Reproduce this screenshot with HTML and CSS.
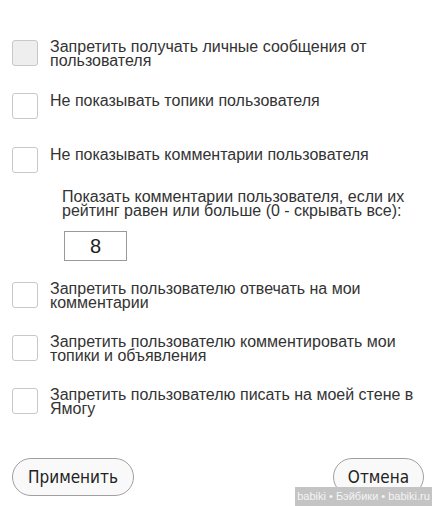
FILE: index.html
```html
<!DOCTYPE html>
<html lang="ru">
<head>
<meta charset="utf-8">
<link rel="stylesheet" href="styles.css">
</head>
<body>
<div class="page">
  <div class="row r1">
    <span class="cb cb-filled"></span>
    <span class="label">Запретить получать личные сообщения от пользователя</span>
  </div>
  <div class="row r2">
    <span class="cb"></span>
    <span class="label">Не показывать топики пользователя</span>
  </div>
  <div class="row r3">
    <span class="cb"></span>
    <span class="label">Не показывать комментарии пользователя</span>
  </div>
  <div class="sub">
    <div class="sub-text">Показать комментарии пользователя, если их рейтинг равен или больше (0 - скрывать все):</div>
    <div class="num">8</div>
  </div>
  <div class="row r4">
    <span class="cb"></span>
    <span class="label">Запретить пользователю отвечать на мои комментарии</span>
  </div>
  <div class="row r5">
    <span class="cb"></span>
    <span class="label">Запретить пользователю комментировать мои топики и объявления</span>
  </div>
  <div class="row r6">
    <span class="cb"></span>
    <span class="label">Запретить пользователю писать на моей стене в Ямогу</span>
  </div>
  <div class="buttons">
    <span class="btn btn-apply">Применить</span>
    <span class="btn btn-cancel">Отмена</span>
  </div>
</div>
<div class="watermark">babiki • Бэйбики • babiki.ru</div>
</body>
</html>
```
FILE: styles.css
```css
html, body {
  margin: 0;
  padding: 0;
  background: #fff;
}
body {
  width: 439px;
  height: 506px;
  position: relative;
  overflow: hidden;
  font-family: "Liberation Sans", Arial, sans-serif;
  color: #333;
}
.page {
  padding: 40px 0 0 12px;
}
.row {
  display: flex;
  align-items: flex-start;
  gap: 12px;
}
.cb {
  flex: none;
  width: 24px;
  height: 24px;
  border: 1px solid #c8c8c8;
  border-radius: 3px;
  background: #fff;
}
.cb-filled {
  background: #eeeeee;
}
.label {
  font-size: 16px;
  line-height: 14px;
  width: 372px;
}
.r2 .label, .r3 .label { padding-top: 1px; }
.r2 { margin-top: 25px; }
.r3 { margin-top: 28px; }
.sub {
  margin: 17px 0 0 50px;
}
.sub-text {
  font-size: 16px;
  line-height: 14px;
  width: 360px;
}
.num {
  margin: 13px 0 0 2px;
  width: 61px;
  height: 28px;
  border: 1px solid #999;
  display: flex;
  align-items: center;
  justify-content: center;
  font-size: 20px;
  color: #222;
}
.r4 { margin-top: 21px; }
.r5 { margin-top: 25px; }
.r6 { margin-top: 25px; }
.buttons {
  display: flex;
  justify-content: space-between;
  margin-top: 42px;
  width: 412px;
}
.btn {
  height: 36px;
  border: 1px solid #a0a0a0;
  border-radius: 19px;
  background: #f9f9f9;
  display: flex;
  align-items: center;
  justify-content: center;
  font-family: "DejaVu Sans Condensed", "DejaVu Sans", sans-serif;
  font-stretch: condensed;
  font-size: 17px;
  color: #222;
}
.btn-apply { width: 120px; }
.btn-cancel { width: 89px; }
.watermark {
  position: absolute;
  left: 295px;
  top: 487px;
  width: 137px;
  height: 19px;
  background: #c4c4c4;
  color: #f4f4f4;
  font-size: 11px;
  line-height: 19px;
  text-align: center;
  font-family: "Liberation Sans", Arial, sans-serif;
}
```
